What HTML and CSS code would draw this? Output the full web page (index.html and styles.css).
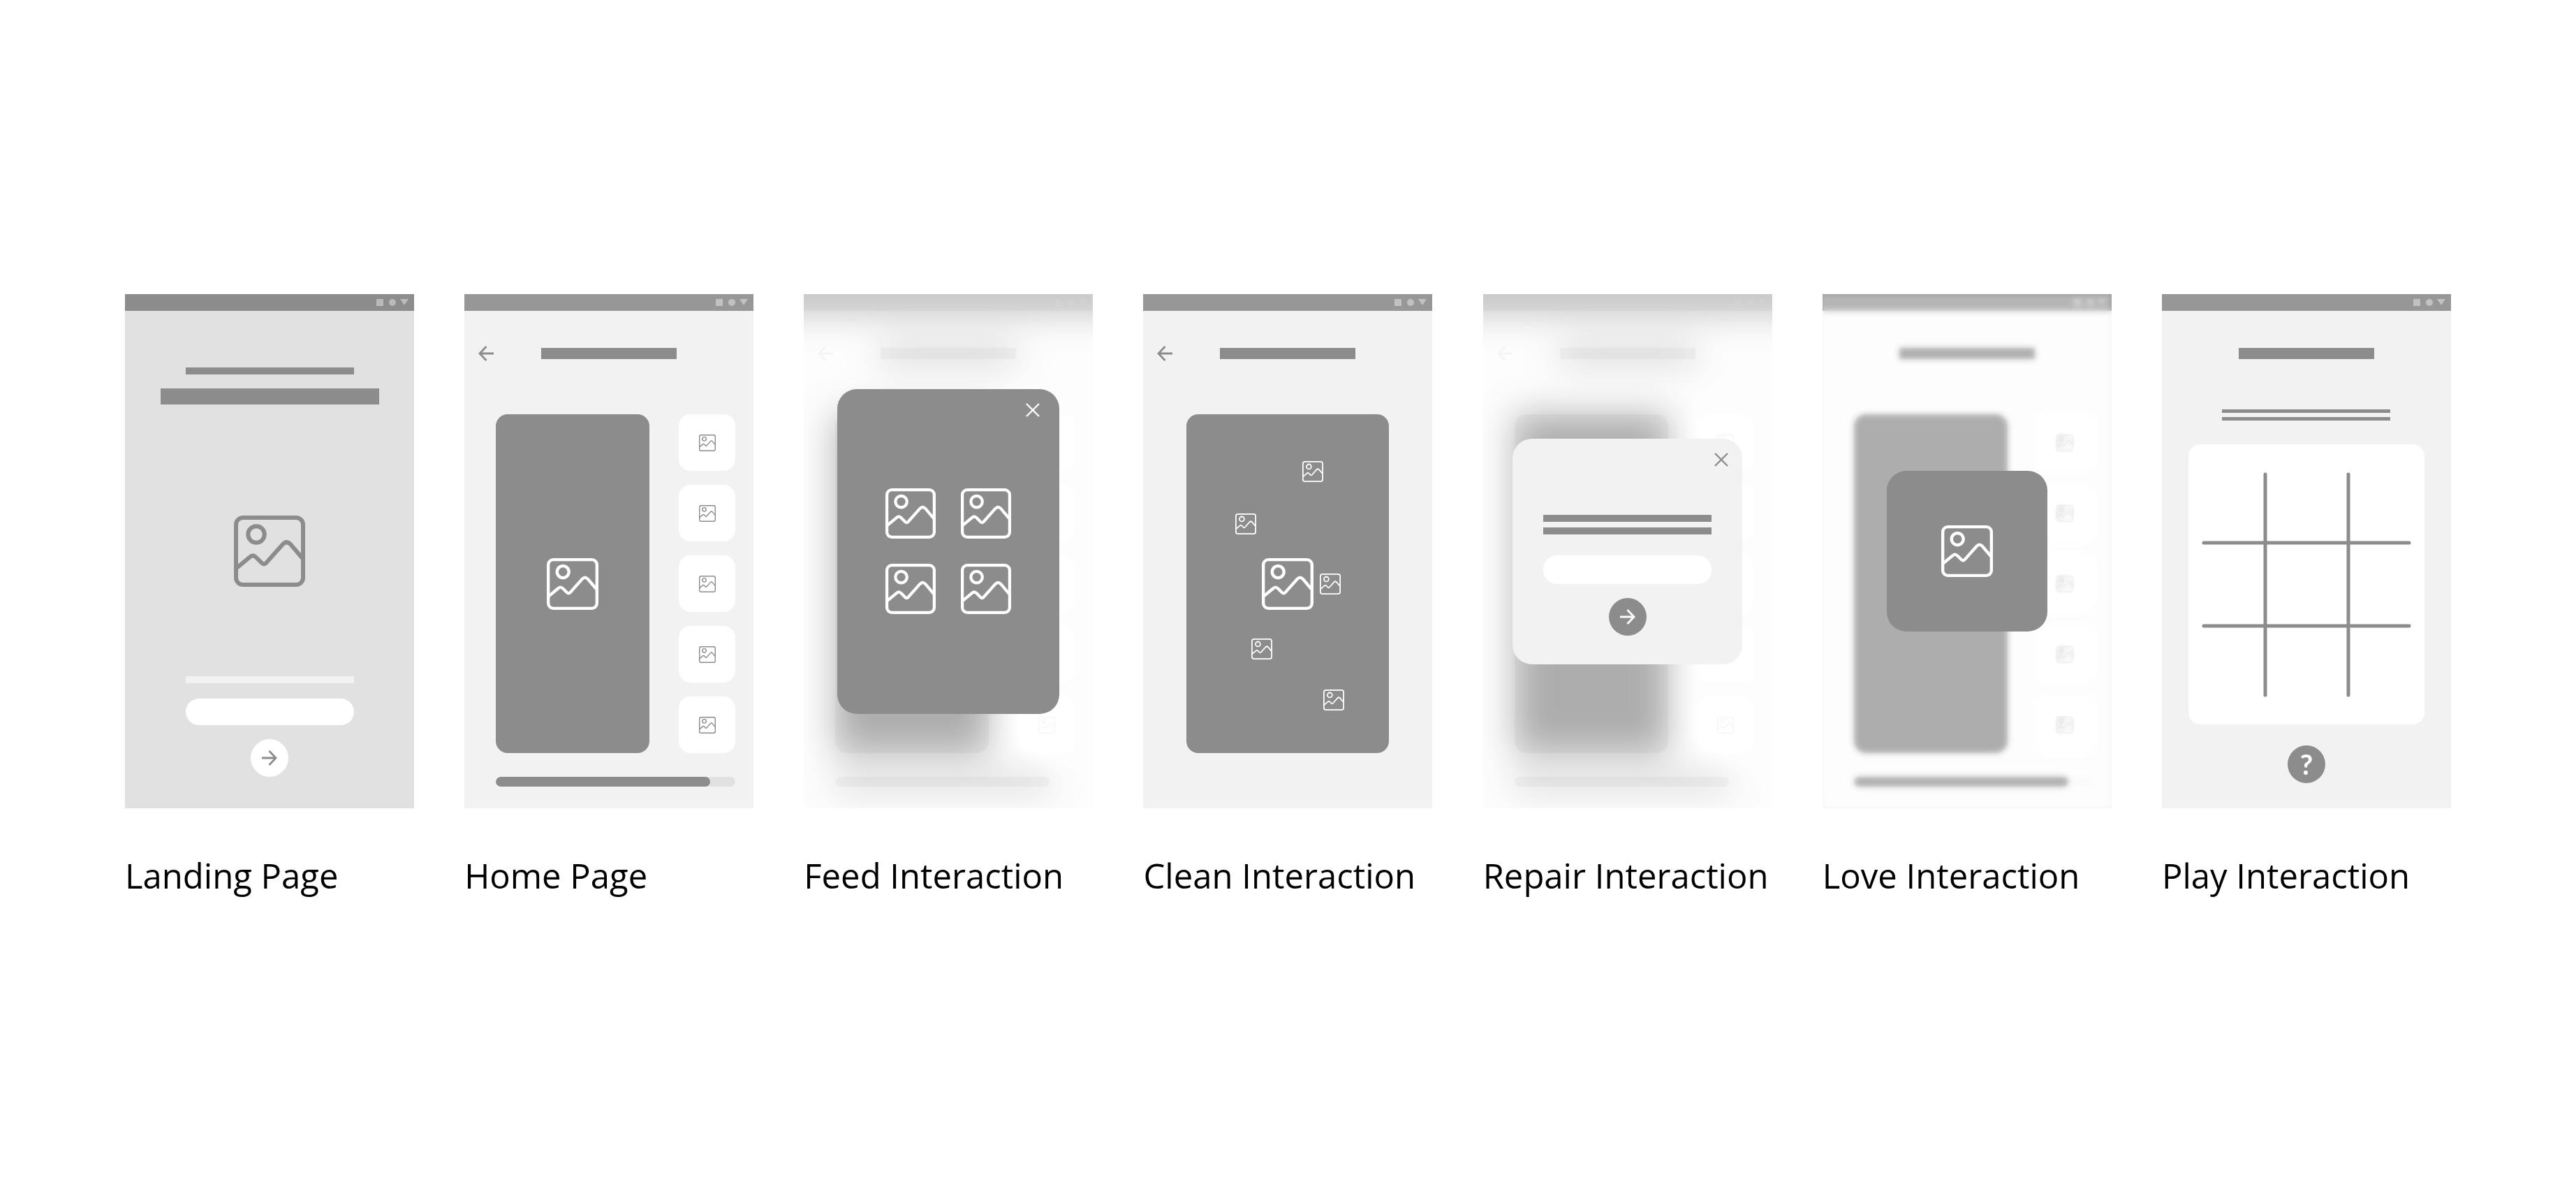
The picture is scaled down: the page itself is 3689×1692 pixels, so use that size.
FILE: index.html
```html
<!DOCTYPE html>
<html lang="en">
<head>
<meta charset="utf-8">
<meta name="viewport" content="width=device-width, initial-scale=1">
<title>Wireframes</title>
<link rel="stylesheet" href="styles.css">
</head>
<body>
<svg class="sprite" aria-hidden="true">
  <symbol id="picture" viewBox="0 0 102 102">
    <g fill="none" stroke="currentColor" stroke-width="6">
      <rect x="3" y="3" width="96" height="96" rx="10"/>
      <circle cx="32" cy="27" r="11.7"/>
      <path d="M4 75L22 60Q27 55 32 60L40 68Q43 71 46 68L70 41Q75.500 35.500 81 41L98 61"/>
    </g>
  </symbol>
  <symbol id="arrow-right" viewBox="0 0 22 22">
    <path d="M0 11H20M10.500 1L20 11L10.500 21" fill="none" stroke="currentColor" stroke-width="2.800"/>
  </symbol>
  <symbol id="arrow-left" viewBox="0 0 22 22">
    <path d="M22 11H2M11.500 1L2 11L11.500 21" fill="none" stroke="currentColor" stroke-width="2.800"/>
  </symbol>
  <symbol id="close" viewBox="0 0 20 20">
    <path d="M1 1L19 19M19 1L1 19" fill="none" stroke="currentColor" stroke-width="2.400"/>
  </symbol>
  <symbol id="status" viewBox="0 0 46 10">
    <path d="M0 0H10V10H0ZM34 0H46L40 9Z" fill="currentColor"/>
    <circle cx="23" cy="5" r="5" fill="currentColor"/>
  </symbol>
</svg>

<main class="flow">
  <figure class="frame">
    <div class="screen screen-landing">
      <div class="status"><svg class="status-icons"><use href="#status"/></svg></div>
      <div class="landing">
        <div class="bar bar-text"></div>
        <div class="bar bar-headline"></div>
        <svg class="icon icon-hero"><use href="#picture"/></svg>
        <div class="bar bar-text bar-light"></div>
        <input class="field" type="text" aria-label="Name">
        <button class="round round-light" type="button" aria-label="Continue"><svg class="icon icon-arrow"><use href="#arrow-right"/></svg></button>
      </div>
    </div>
    <figcaption class="caption">Landing Page</figcaption>
  </figure>

  <figure class="frame">
    <div class="screen">
      <div class="status"><svg class="status-icons"><use href="#status"/></svg></div>
      <div class="header">
        <button class="back" type="button" aria-label="Back"><svg class="icon icon-arrow"><use href="#arrow-left"/></svg></button>
        <div class="bar bar-title"></div>
      </div>
      <div class="home">
        <div class="panel"><svg class="icon icon-large"><use href="#picture"/></svg></div>
        <div class="actions">
          <button class="action" type="button" aria-label="Feed"><svg class="icon icon-tiny"><use href="#picture"/></svg></button>
          <button class="action" type="button" aria-label="Clean"><svg class="icon icon-tiny"><use href="#picture"/></svg></button>
          <button class="action" type="button" aria-label="Repair"><svg class="icon icon-tiny"><use href="#picture"/></svg></button>
          <button class="action" type="button" aria-label="Love"><svg class="icon icon-tiny"><use href="#picture"/></svg></button>
          <button class="action" type="button" aria-label="Play"><svg class="icon icon-tiny"><use href="#picture"/></svg></button>
        </div>
      </div>
      <progress class="meter" max="343" value="307" aria-label="Health"></progress>
    </div>
    <figcaption class="caption">Home Page</figcaption>
  </figure>

  <figure class="frame">
    <div class="screen screen-dimmed">
      <div class="status"><svg class="status-icons"><use href="#status"/></svg></div>
      <div class="header">
        <button class="back" type="button" aria-label="Back"><svg class="icon icon-arrow"><use href="#arrow-left"/></svg></button>
        <div class="bar bar-title"></div>
      </div>
      <div class="home">
        <div class="panel"></div>
        <div class="actions">
          <button class="action" type="button" aria-label="Feed"><svg class="icon icon-tiny"><use href="#picture"/></svg></button>
          <button class="action" type="button" aria-label="Clean"><svg class="icon icon-tiny"><use href="#picture"/></svg></button>
          <button class="action" type="button" aria-label="Repair"><svg class="icon icon-tiny"><use href="#picture"/></svg></button>
          <button class="action" type="button" aria-label="Love"><svg class="icon icon-tiny"><use href="#picture"/></svg></button>
          <button class="action" type="button" aria-label="Play"><svg class="icon icon-tiny"><use href="#picture"/></svg></button>
        </div>
      </div>
      <progress class="meter" max="343" value="307" aria-label="Health"></progress>
      <div class="veil veil-deep"></div>
      <div class="overlay">
        <div class="dialog dialog-feed">
          <button class="close close-inset" type="button" aria-label="Close"><svg class="icon icon-close"><use href="#close"/></svg></button>
          <div class="foods">
            <svg class="icon icon-food"><use href="#picture"/></svg>
            <svg class="icon icon-food"><use href="#picture"/></svg>
            <svg class="icon icon-food"><use href="#picture"/></svg>
            <svg class="icon icon-food"><use href="#picture"/></svg>
          </div>
        </div>
      </div>
    </div>
    <figcaption class="caption">Feed Interaction</figcaption>
  </figure>

  <figure class="frame">
    <div class="screen">
      <div class="status"><svg class="status-icons"><use href="#status"/></svg></div>
      <div class="header">
        <button class="back" type="button" aria-label="Back"><svg class="icon icon-arrow"><use href="#arrow-left"/></svg></button>
        <div class="bar bar-title"></div>
      </div>
      <div class="panel panel-wide">
        <svg class="icon icon-large"><use href="#picture"/></svg>
        <svg class="icon spot spot-1"><use href="#picture"/></svg>
        <svg class="icon spot spot-2"><use href="#picture"/></svg>
        <svg class="icon spot spot-3"><use href="#picture"/></svg>
        <svg class="icon spot spot-4"><use href="#picture"/></svg>
        <svg class="icon spot spot-5"><use href="#picture"/></svg>
      </div>
    </div>
    <figcaption class="caption">Clean Interaction</figcaption>
  </figure>

  <figure class="frame">
    <div class="screen screen-dimmed">
      <div class="status"><svg class="status-icons"><use href="#status"/></svg></div>
      <div class="header">
        <button class="back" type="button" aria-label="Back"><svg class="icon icon-arrow"><use href="#arrow-left"/></svg></button>
        <div class="bar bar-title"></div>
      </div>
      <div class="home">
        <div class="panel"></div>
        <div class="actions">
          <button class="action" type="button" aria-label="Feed"><svg class="icon icon-tiny"><use href="#picture"/></svg></button>
          <button class="action" type="button" aria-label="Clean"><svg class="icon icon-tiny"><use href="#picture"/></svg></button>
          <button class="action" type="button" aria-label="Repair"><svg class="icon icon-tiny"><use href="#picture"/></svg></button>
          <button class="action" type="button" aria-label="Love"><svg class="icon icon-tiny"><use href="#picture"/></svg></button>
          <button class="action" type="button" aria-label="Play"><svg class="icon icon-tiny"><use href="#picture"/></svg></button>
        </div>
      </div>
      <progress class="meter" max="343" value="307" aria-label="Health"></progress>
      <div class="veil veil-deep"></div>
      <div class="overlay">
        <div class="dialog dialog-repair">
          <button class="close" type="button" aria-label="Close"><svg class="icon icon-close"><use href="#close"/></svg></button>
          <div class="bar bar-text"></div>
          <div class="bar bar-text"></div>
          <input class="field" type="text" aria-label="Answer">
          <button class="round" type="button" aria-label="Submit"><svg class="icon icon-arrow"><use href="#arrow-right"/></svg></button>
        </div>
      </div>
    </div>
    <figcaption class="caption">Repair Interaction</figcaption>
  </figure>

  <figure class="frame">
    <div class="screen screen-dimmed">
      <div class="status"><svg class="status-icons"><use href="#status"/></svg></div>
      <div class="header">
        <div class="bar bar-title"></div>
      </div>
      <div class="home">
        <div class="panel"></div>
        <div class="actions">
          <button class="action" type="button" aria-label="Feed"><svg class="icon icon-tiny"><use href="#picture"/></svg></button>
          <button class="action" type="button" aria-label="Clean"><svg class="icon icon-tiny"><use href="#picture"/></svg></button>
          <button class="action" type="button" aria-label="Repair"><svg class="icon icon-tiny"><use href="#picture"/></svg></button>
          <button class="action" type="button" aria-label="Love"><svg class="icon icon-tiny"><use href="#picture"/></svg></button>
          <button class="action" type="button" aria-label="Play"><svg class="icon icon-tiny"><use href="#picture"/></svg></button>
        </div>
      </div>
      <progress class="meter" max="343" value="307" aria-label="Health"></progress>
      <div class="veil veil-soft"></div>
      <div class="overlay">
        <div class="dialog dialog-love"><svg class="icon icon-large"><use href="#picture"/></svg></div>
      </div>
    </div>
    <figcaption class="caption">Love Interaction</figcaption>
  </figure>

  <figure class="frame">
    <div class="screen">
      <div class="status"><svg class="status-icons"><use href="#status"/></svg></div>
      <div class="header header-play">
        <div class="bar bar-title"></div>
      </div>
      <div class="play">
        <div class="bar bar-thin"></div>
        <div class="bar bar-thin"></div>
        <svg class="board" viewBox="0 0 338 401">
          <path d="M22 141H316M22 260H316M110 43V359M229 43V359" fill="none" stroke="currentColor" stroke-width="5" stroke-linecap="round"/>
        </svg>
        <button class="round" type="button" aria-label="Help">?</button>
      </div>
    </div>
    <figcaption class="caption">Play Interaction</figcaption>
  </figure>
</main>
</body>
</html>
```
FILE: styles.css
```css
:root {
  --ink: #8c8c8c;
  --paper: #f2f2f2;
}

* {
  box-sizing: border-box;
}

body {
  margin: 0;
  background: #fff;
  color: #000;
  font-family: "Open Sans", "Noto Sans", sans-serif;
}

button,
input {
  margin: 0;
  padding: 0;
  border: 0;
  background: none;
  color: inherit;
  font: inherit;
}

.sprite {
  position: absolute;
  width: 0;
  height: 0;
}

.flow {
  display: flex;
  flex-wrap: wrap;
  justify-content: space-between;
  gap: 72px;
  padding: 421px 179px 100px;
}

.frame {
  display: flex;
  flex-direction: column;
  gap: 66px;
  width: 414px;
  margin: 0;
}

.caption {
  font-size: 49px;
  line-height: 60px;
  white-space: nowrap;
}

/* Phone screen */
.screen {
  position: relative;
  display: flex;
  flex-direction: column;
  min-height: 736px;
  overflow: hidden;
  background: var(--paper);
  color: var(--ink);
}

.screen-landing {
  background: #e1e1e1;
}

.status {
  display: flex;
  justify-content: flex-end;
  align-items: center;
  height: 24px;
  padding-right: 8px;
  background: #979797;
  color: #c1c1c1;
}

.screen-landing .status {
  background: var(--ink);
  color: #bababa;
}

.status-icons {
  width: 46px;
  height: 10px;
}

.header {
  display: grid;
  grid-template-columns: 1fr auto 1fr;
  align-items: center;
  height: 148px;
  padding: 49px 20px 75px;
}

.header-play {
  height: 141px;
  padding-bottom: 68px;
}

.back {
  display: flex;
  grid-column: 1;
  justify-self: start;
}

/* Placeholder lines of text */
.bar {
  background: var(--ink);
}

.bar-title {
  grid-column: 2;
  width: 194px;
  height: 16px;
}

.bar-text {
  width: 241px;
  height: 10px;
}

.bar-headline {
  width: 313px;
  height: 23px;
  margin-top: 20px;
}

.bar-light {
  background: var(--paper);
}

.bar-thin {
  width: 241px;
  height: 5px;
}

.bar-thin + .bar-thin {
  margin-top: 6px;
}

/* Icons */
.icon {
  display: block;
  flex: none;
}

.icon-hero {
  width: 102px;
  height: 102px;
  margin: 159px 0 128px;
}

.icon-large {
  width: 74px;
  height: 74px;
}

.icon-food {
  width: 72px;
  height: 72px;
}

.icon-tiny {
  width: 24px;
  height: 24px;
}

.icon-arrow {
  width: 22px;
  height: 22px;
}

.icon-close {
  width: 20px;
  height: 20px;
}

/* Controls */
.field {
  width: 241px;
  height: 38px;
  border-radius: 20px;
  background: #fff;
}

.round {
  display: flex;
  justify-content: center;
  align-items: center;
  width: 54px;
  height: 54px;
  margin-top: 20px;
  border-radius: 50%;
  background: var(--ink);
  color: #fff;
  font-family: Lato, sans-serif;
  font-size: 40px;
  font-weight: 700;
  line-height: 54px;
}

.round-light {
  background: #fff;
  color: var(--ink);
}

/* Landing */
.landing {
  display: flex;
  flex-direction: column;
  align-items: center;
  padding-top: 81px;
}

.landing .field {
  margin-top: 22px;
}

/* Home */
.home {
  display: flex;
  justify-content: space-between;
  padding: 0 26px 0 45px;
}

.panel {
  display: flex;
  justify-content: center;
  align-items: center;
  width: 220px;
  height: 485px;
  border-radius: 17px;
  background: var(--ink);
  color: #fff;
}

.actions {
  display: flex;
  flex-direction: column;
  gap: 20px;
}

.action {
  display: flex;
  justify-content: center;
  align-items: center;
  width: 81px;
  height: 81px;
  border-radius: 17px;
  background: #fff;
}

.meter {
  --track: #e1e1e1;
  appearance: none;
  width: auto;
  height: 14px;
  margin: 34px 26px 0 45px;
  border: 0;
  border-radius: 7px;
  overflow: hidden;
  background: var(--track);
}

.screen-dimmed .meter {
  --track: #f0f0f0;
}

.meter::-webkit-progress-bar {
  background: var(--track);
}

.meter::-webkit-progress-value {
  border-radius: 7px;
  background: var(--ink);
}

/* Clean */
.panel-wide {
  position: relative;
  align-self: center;
  width: 290px;
}

.spot {
  position: absolute;
  width: 30px;
  height: 30px;
}

.spot-1 { left: 166px; top: 67px; }
.spot-2 { left: 70px; top: 142px; }
.spot-3 { left: 191px; top: 228px; }
.spot-4 { left: 93px; top: 321px; }
.spot-5 { left: 196px; top: 394px; }

/* Layers over the home screen */
.veil,
.overlay {
  position: absolute;
  inset: 0;
}

.veil {
  opacity: 0.92;
}

/* Out-of-focus copy of the home screen, bled past the edges so the blur stays opaque */
.veil-deep {
  inset: -80px;
  background:
    linear-gradient(#979797, #979797) 0 56px / 100% 48px no-repeat,
    linear-gradient(var(--ink), var(--ink)) 190px 157px / 194px 16px no-repeat,
    linear-gradient(var(--ink), var(--ink)) 125px 252px / 220px 485px no-repeat,
    linear-gradient(#fff, #fff) 387px 252px / 81px 485px no-repeat,
    linear-gradient(var(--ink), var(--ink)) 125px 771px / 307px 14px no-repeat,
    var(--paper);
  filter: blur(26px) contrast(0.586) brightness(1.305);
}

.veil-soft {
  backdrop-filter: blur(4px) contrast(0.586) brightness(1.305);
}

.overlay {
  display: flex;
  justify-content: center;
  align-items: center;
}

.dialog {
  position: relative;
  display: flex;
  flex-direction: column;
  justify-content: center;
  align-items: center;
  border-radius: 28px;
  background: var(--ink);
  color: #fff;
}

.dialog-feed {
  width: 318px;
  height: 465px;
}

.dialog-repair {
  width: 329px;
  padding: 109px 44px 41px;
  background: var(--paper);
  color: var(--ink);
}

.dialog-repair .bar + .bar {
  margin-top: 8px;
}

.dialog-repair .field {
  height: 41px;
  margin-top: 30px;
}

.dialog-love {
  width: 230px;
  height: 230px;
}

.close {
  position: absolute;
  top: 20px;
  right: 20px;
  display: flex;
}

.close-inset {
  right: 28px;
}

.foods {
  display: grid;
  grid-template-columns: auto auto;
  gap: 36px;
}

/* Play */
.play {
  display: flex;
  flex-direction: column;
  align-items: center;
}

.board {
  width: 338px;
  height: 401px;
  margin: 34px 0 10px;
  border-radius: 17px;
  background: #fff;
}
```
